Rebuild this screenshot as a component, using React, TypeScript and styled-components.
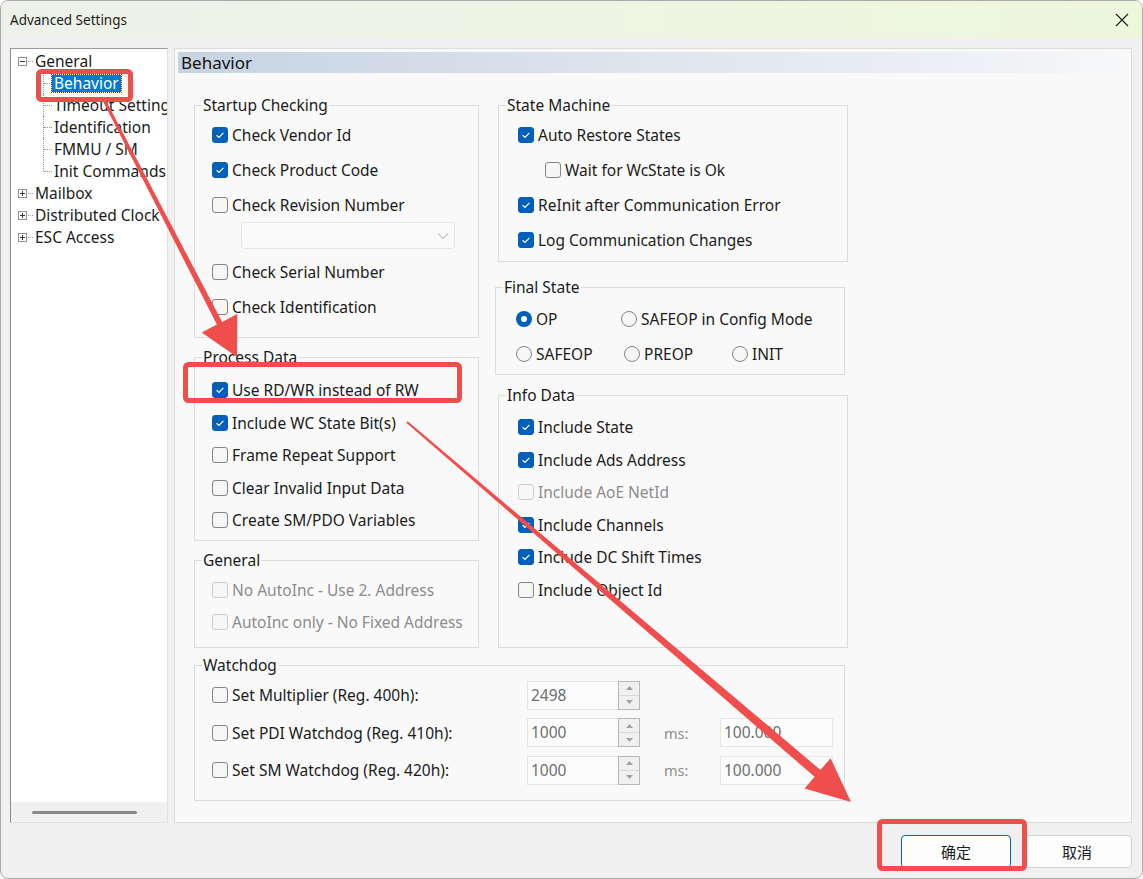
import React from "react";
import styled, { createGlobalStyle, css } from "styled-components";

const GlobalStyle = createGlobalStyle`
  html, body {
    margin: 0;
    padding: 0;
    background: #ffffff;
  }
  body {
    font-family: "Noto Sans", "Noto Sans CJK SC", sans-serif;
    color: #1b1b1b;
  }
  * {
    box-sizing: border-box;
  }
`;

type Pt = [number, number];

// builds a tapered arrow polygon from s to t
function arrowShape(s: Pt, t: Pt, w0: number, w1: number, len: number, half: number) {
  const dx = t[0] - s[0];
  const dy = t[1] - s[1];
  const d = Math.hypot(dx, dy);
  const ux = dx / d;
  const uy = dy / d;
  const px = -uy;
  const py = ux;
  const bx = t[0] - ux * len;
  const by = t[1] - uy * len;
  const pts: Pt[] = [
    [s[0] + (px * w0) / 2, s[1] + (py * w0) / 2],
    [bx + (px * w1) / 2, by + (py * w1) / 2],
    [bx + px * half, by + py * half],
    t,
    [bx - px * half, by - py * half],
    [bx - (px * w1) / 2, by - (py * w1) / 2],
    [s[0] - (px * w0) / 2, s[1] - (py * w0) / 2],
  ];
  return pts.map((p) => p.map((n) => n.toFixed(1)).join(",")).join(" ");
}

const treeChildren = [
  { label: "Behavior", selected: true },
  { label: "Timeout Settings" },
  { label: "Identification" },
  { label: "FMMU / SM" },
  { label: "Init Commands" },
];

const otherRoots = ["Mailbox", "Distributed Clock", "ESC Access"];

export default function App() {
  return (
    <>
      <GlobalStyle />
      <Window>
        <TitleBar>
          <span>Advanced Settings</span>
          <svg width="14" height="14" viewBox="0 0 14 14">
            <path d="M1 1L13 13M13 1L1 13" stroke="#1b1b1b" strokeWidth="1.1" />
          </svg>
        </TitleBar>

        <Main>
          <Tree>
            <TreeList>
              <TreeRoot>
                <Expander open />
                <Connector />
                <TreeText>General</TreeText>
              </TreeRoot>
              {treeChildren.map((c, i) => (
                <TreeChild key={c.label} $last={i === treeChildren.length - 1}>
                  <TreeLabel $selected={c.selected}>{c.label}</TreeLabel>
                </TreeChild>
              ))}
              {otherRoots.map((r) => (
                <TreeRoot key={r}>
                  <Expander />
                  <Connector />
                  <TreeText>{r}</TreeText>
                </TreeRoot>
              ))}
            </TreeList>
            <ScrollStrip>
              <ScrollThumb />
            </ScrollStrip>
          </Tree>

          <Panel>
            <PanelHeader>Behavior</PanelHeader>
            <Content>
              <Columns>
                <Column $w={285}>
                  <Group $h={233}>
                    <GroupTitle>Startup Checking</GroupTitle>
                    <Rows $pt={2.5} $pl={17} $rh={35}>
                      <Check checked label="Check Vendor Id" />
                      <Check checked label="Check Product Code" />
                      <Check label="Check Revision Number" />
                      <Select>
                        <svg width="12" height="8" viewBox="0 0 12 8">
                          <path d="M1 1.5L6 6.5L11 1.5" stroke="#9a9a9a" strokeWidth="1" fill="none" />
                        </svg>
                      </Select>
                      <Check label="Check Serial Number" />
                      <Check label="Check Identification" />
                    </Rows>
                  </Group>

                  <Group $h={184} $mt={19}>
                    <GroupTitle>Process Data</GroupTitle>
                    <Rows $pt={6.75} $pl={17} $rh={32.5}>
                      <Check checked label="Use RD/WR instead of RW" />
                      <Check checked label="Include WC State Bit(s)" />
                      <Check label="Frame Repeat Support" />
                      <Check label="Clear Invalid Input Data" />
                      <Check label="Create SM/PDO Variables" />
                    </Rows>
                  </Group>

                  <Group $h={88} $mt={19}>
                    <GroupTitle>General</GroupTitle>
                    <Rows $pt={4} $pl={17} $rh={32}>
                      <Check disabled label="No AutoInc - Use 2. Address" />
                      <Check disabled label="AutoInc only - No Fixed Address" />
                    </Rows>
                  </Group>
                </Column>

                <Column $w={350}>
                  <Group $h={157}>
                    <GroupTitle>State Machine</GroupTitle>
                    <Rows $pt={2.5} $pl={19} $rh={35}>
                      <Check checked label="Auto Restore States" />
                      <Check indent={27} label="Wait for WcState is Ok" />
                      <Check checked label="ReInit after Communication Error" />
                      <Check checked label="Log Communication Changes" />
                    </Rows>
                  </Group>

                  <Group $h={88} $mt={25} $shift={-3} $w={350}>
                    <GroupTitle>Final State</GroupTitle>
                    <Rows $pt={4.5} $pl={20} $rh={35}>
                      <RadioLine>
                        <Radio checked w={105} label="OP" />
                        <Radio label="SAFEOP in Config Mode" />
                      </RadioLine>
                      <RadioLine>
                        <Radio w={108} label="SAFEOP" />
                        <Radio w={108} label="PREOP" />
                        <Radio label="INIT" />
                      </RadioLine>
                    </Rows>
                  </Group>

                  <Group $h={253} $mt={20}>
                    <GroupTitle>Info Data</GroupTitle>
                    <Rows $pt={5.7} $pl={19} $rh={32.6}>
                      <Check checked label="Include State" />
                      <Check checked label="Include Ads Address" />
                      <Check disabled label="Include AoE NetId" />
                      <Check checked label="Include Channels" />
                      <Check checked label="Include DC Shift Times" />
                      <Check label="Include Object Id" />
                    </Rows>
                  </Group>
                </Column>
              </Columns>

              <Group $h={136} $mt={17} $w={651}>
                <GroupTitle>Watchdog</GroupTitle>
                <Rows $pt={1.25} $pl={17} $rh={37.5}>
                  <WatchRow>
                    <Check label="Set Multiplier (Reg. 400h):" />
                    <SpinBox value="2498" />
                  </WatchRow>
                  <WatchRow>
                    <Check label="Set PDI Watchdog (Reg. 410h):" />
                    <SpinBox value="1000" />
                    <Unit>ms:</Unit>
                    <Field>100.000</Field>
                  </WatchRow>
                  <WatchRow>
                    <Check label="Set SM Watchdog (Reg. 420h):" />
                    <SpinBox value="1000" />
                    <Unit>ms:</Unit>
                    <Field>100.000</Field>
                  </WatchRow>
                </Rows>
              </Group>
            </Content>
          </Panel>
        </Main>

        <Footer>
          <Button $primary>确定</Button>
          <Button>取消</Button>
        </Footer>

        <Overlay width="1143" height="879" viewBox="0 0 1143 879">
          <rect x="38.5" y="71.5" width="92" height="28" rx="3" fill="none" stroke="#f04d4d" strokeWidth="5" />
          <rect x="185.5" y="364.5" width="274" height="36" rx="3" fill="none" stroke="#f04d4d" strokeWidth="5" />
          <rect x="879.5" y="821.5" width="145" height="47" rx="3" fill="none" stroke="#f04d4d" strokeWidth="5" />
          <polygon points={arrowShape([104, 100], [237, 357], 3, 6, 38, 20)} fill="#f04d4d" />
          <polygon points={arrowShape([407, 422], [851, 802], 2, 9, 44, 20)} fill="#f04d4d" />
        </Overlay>
      </Window>
    </>
  );
}

function Expander({ open }: { open?: boolean }) {
  return (
    <ExpanderBox width="9" height="9" viewBox="0 0 9 9">
      <rect x="0.5" y="0.5" width="8" height="8" fill="#fff" stroke="#919191" />
      <path d="M2 4.5h5" stroke="#333" />
      {!open && <path d="M4.5 2v5" stroke="#333" />}
    </ExpanderBox>
  );
}

function Check({
  label,
  checked,
  disabled,
  indent,
}: {
  label: string;
  checked?: boolean;
  disabled?: boolean;
  indent?: number;
}) {
  return (
    <CheckRow $indent={indent} $disabled={disabled}>
      <Box $checked={checked} $disabled={disabled}>
        {checked && (
          <svg width="16" height="16" viewBox="0 0 16 16">
            <path d="M4.6 8.3L7 10.5L11.4 5.8" stroke="#fff" strokeWidth="1.2" fill="none" />
          </svg>
        )}
      </Box>
      <span>{label}</span>
    </CheckRow>
  );
}

function Radio({ label, checked, w }: { label: string; checked?: boolean; w?: number }) {
  return (
    <RadioItem $w={w}>
      <RadioDot $checked={checked} />
      <span>{label}</span>
    </RadioItem>
  );
}

function SpinBox({ value }: { value: string }) {
  return (
    <Spin>
      <SpinInput>{value}</SpinInput>
      <SpinButtons>
        <SpinHalf>
          <svg width="7" height="4" viewBox="0 0 7 4">
            <path d="M0 4L3.5 0L7 4Z" fill="#a0a0a0" />
          </svg>
        </SpinHalf>
        <SpinHalf>
          <svg width="7" height="4" viewBox="0 0 7 4">
            <path d="M0 0L3.5 4L7 0Z" fill="#a0a0a0" />
          </svg>
        </SpinHalf>
      </SpinButtons>
    </Spin>
  );
}

const Window = styled.div`
  position: relative;
  width: 1143px;
  height: 879px;
  border: 1px solid #ababab;
  border-radius: 8px;
  overflow: hidden;
  background: #f0f0f0;
  display: flex;
  flex-direction: column;
`;

const TitleBar = styled.div`
  flex: none;
  height: 37px;
  display: flex;
  align-items: center;
  justify-content: space-between;
  padding: 0 13px 0 9px;
  font-size: 13.5px;
  background: linear-gradient(90deg, #edf1ea 0%, #eef5e3 55%, #edf7dc 100%);
`;

const Main = styled.div`
  flex: none;
  height: 785px;
  display: flex;
  gap: 6px;
  padding: 10px 10px 0 9px;
`;

const Tree = styled.div`
  width: 158px;
  display: flex;
  flex-direction: column;
  background: #ffffff;
  border-top: 1px solid #9a9a9a;
  border-left: 1px solid #8a8a8a;
  border-right: 1px solid #e0e0e0;
  border-bottom: 1px solid #e0e0e0;
  overflow: hidden;
  font-size: 15.5px;
`;

const TreeList = styled.div`
  flex: 1;
  padding-top: 1px;
  overflow: hidden;
`;

const TreeRoot = styled.div`
  height: 22px;
  display: flex;
  align-items: center;
  padding-left: 7px;
  white-space: nowrap;
`;

const ExpanderBox = styled.svg`
  flex: none;
`;

const Connector = styled.span`
  width: 5px;
  margin: 0 2px 0 1px;
  border-top: 1px dotted #9a9a9a;
`;

const TreeText = styled.span`
  line-height: 17px;
`;

const TreeChild = styled.div<{ $last?: boolean }>`
  position: relative;
  height: 22px;
  display: flex;
  align-items: center;
  padding-left: 41px;
  white-space: nowrap;
  &::before {
    content: "";
    position: absolute;
    left: 32px;
    top: 0;
    bottom: ${(p) => (p.$last ? "50%" : "0")};
    border-left: 1px dotted #9a9a9a;
  }
  &::after {
    content: "";
    position: absolute;
    left: 33px;
    top: 50%;
    width: 8px;
    border-top: 1px dotted #9a9a9a;
  }
`;

const TreeLabel = styled.span<{ $selected?: boolean }>`
  padding: 0 2px;
  line-height: 17px;
  ${(p) =>
    p.$selected &&
    css`
      background: #0078d7;
      color: #ffffff;
      outline: 1px dotted #5a3a00;
    `}
`;

const ScrollStrip = styled.div`
  flex: none;
  height: 20px;
  display: flex;
  align-items: center;
  padding-left: 21px;
  background: #f0f0f0;
`;

const ScrollThumb = styled.div`
  width: 105px;
  height: 3px;
  border-radius: 2px;
  background: #8a8a8a;
`;

const Panel = styled.div`
  flex: 1;
  display: flex;
  flex-direction: column;
  padding: 3px;
  background: #f9f9f9;
  border: 1px solid #dcdcdc;
`;

const PanelHeader = styled.div`
  height: 21px;
  padding-left: 3px;
  font-size: 17px;
  line-height: 21px;
  color: #111;
  background: linear-gradient(90deg, #c6d3e1 0%, #d9e2ec 40%, #eef1f5 85%, #f7f8f9 100%);
`;

const Content = styled.div`
  padding: 32px 0 0 16px;
  font-size: 15.5px;
`;

const Columns = styled.div`
  display: flex;
  gap: 19px;
`;

const Column = styled.div<{ $w: number }>`
  width: ${(p) => p.$w}px;
  display: flex;
  flex-direction: column;
`;

const Group = styled.div<{ $h: number; $mt?: number; $shift?: number; $w?: number }>`
  flex: none;
  height: ${(p) => p.$h}px;
  margin-top: ${(p) => p.$mt ?? 0}px;
  margin-left: ${(p) => p.$shift ?? 0}px;
  ${(p) => p.$w && `width: ${p.$w}px;`}
  border: 1px solid #dcdcdc;
`;

const GroupTitle = styled.div`
  width: fit-content;
  height: 20px;
  margin: -11px 0 0 7px;
  padding: 0 1px;
  line-height: 20px;
  background: #f9f9f9;
`;

const Rows = styled.div<{ $pt: number; $pl: number; $rh: number }>`
  padding: ${(p) => p.$pt}px 0 0 ${(p) => p.$pl}px;
  --row-h: ${(p) => p.$rh}px;
`;

const CheckRow = styled.label<{ $indent?: number; $disabled?: boolean }>`
  display: flex;
  align-items: center;
  gap: 4px;
  height: var(--row-h);
  padding-left: ${(p) => p.$indent ?? 0}px;
  color: ${(p) => (p.$disabled ? "#8c8c8c" : "#1b1b1b")};
  white-space: nowrap;
`;

const Box = styled.span<{ $checked?: boolean; $disabled?: boolean }>`
  flex: none;
  width: 16px;
  height: 16px;
  border-radius: 3px;
  display: inline-flex;
  align-items: center;
  justify-content: center;
  ${(p) =>
    p.$checked
      ? css`
          background: #005fb8;
          border: 1px solid #005fb8;
          & > svg {
            margin: -1px;
          }
        `
      : css`
          background: #f6f6f6;
          border: 1px solid ${p.$disabled ? "#cdcdcd" : "#858585"};
        `}
`;

const Select = styled.div`
  width: 214px;
  height: 27px;
  margin: -0.5px 0 5.5px 29px;
  display: flex;
  align-items: center;
  justify-content: flex-end;
  padding-right: 5px;
  border: 1px solid #e6e6e6;
  border-radius: 3px;
  background: #fafafa;
`;

const RadioLine = styled.div`
  display: flex;
  align-items: center;
  height: var(--row-h);
`;

const RadioItem = styled.div<{ $w?: number }>`
  display: flex;
  align-items: center;
  gap: 4px;
  white-space: nowrap;
  ${(p) => p.$w && `width: ${p.$w}px;`}
`;

const RadioDot = styled.span<{ $checked?: boolean }>`
  flex: none;
  width: 16px;
  height: 16px;
  border-radius: 50%;
  display: inline-flex;
  align-items: center;
  justify-content: center;
  ${(p) =>
    p.$checked
      ? css`
          background: #005fb8;
          &::after {
            content: "";
            width: 6px;
            height: 6px;
            border-radius: 50%;
            background: #ffffff;
          }
        `
      : css`
          background: #f6f6f6;
          border: 1px solid #858585;
        `}
`;

const WatchRow = styled.div`
  display: grid;
  grid-template-columns: 315px 113px 80px 113px;
  align-items: center;
  height: var(--row-h);
`;

const Spin = styled.div`
  display: flex;
  height: 29px;
`;

const SpinInput = styled.div`
  flex: 1;
  padding: 0 0 2px 3px;
  line-height: 26px;
  color: #6e6e6e;
  background: #fbfbfb;
  border: 1px solid #e4e4e4;
  border-right: none;
`;

const SpinButtons = styled.div`
  width: 22px;
  display: flex;
  flex-direction: column;
  border: 1px solid #b9b9b9;
  background: #f0f0f0;
`;

const SpinHalf = styled.div`
  flex: 1;
  display: flex;
  align-items: center;
  justify-content: center;
  & + & {
    border-top: 1px solid #dadada;
  }
`;

const Unit = styled.span`
  padding-left: 24px;
  color: #8c8c8c;
  font-size: 14.5px;
`;

const Field = styled.div`
  height: 29px;
  padding: 0 0 2px 3px;
  line-height: 26px;
  color: #6e6e6e;
  background: #fbfbfb;
  border: 1px solid #e6e6e6;
`;

const Footer = styled.div`
  flex: 1;
  display: flex;
  justify-content: flex-end;
  align-items: flex-start;
  gap: 11px;
  padding: 12px 10px 0 0;
`;

const Button = styled.button<{ $primary?: boolean }>`
  width: 110px;
  height: 33px;
  border-radius: 4px;
  border: 1px solid ${(p) => (p.$primary ? "#0a64c2" : "#d1d1d1")};
  background: #fdfdfd;
  color: #1b1b1b;
  font-family: "Noto Sans CJK SC", sans-serif;
  font-size: 15px;
  padding: 0;
`;

const Overlay = styled.svg`
  position: absolute;
  left: -1px;
  top: -1px;
  pointer-events: none;
`;
